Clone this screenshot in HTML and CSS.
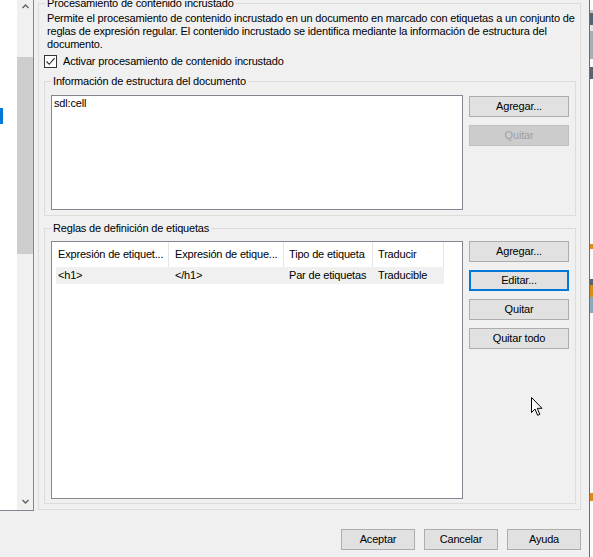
FILE: index.html
```html
<!DOCTYPE html>
<html lang="es">
<head>
<meta charset="utf-8">
<title>Procesamiento de contenido incrustado</title>
<link rel="stylesheet" href="styles.css">
</head>
<body>
<div class="screen">
  <div class="left-pane">
    <div class="tree"><span class="marker"></span></div>
    <div class="vscroll">
      <div class="arrow-btn"><svg width="7" height="5" viewBox="0 0 7 5"><path d="M0.5 4 L3.5 1 L6.5 4" fill="none" stroke="#606060" stroke-width="1.4"/></svg></div>
      <div class="thumb"></div>
      <div class="arrow-btn bottom"><svg width="7" height="5" viewBox="0 0 7 5"><path d="M0.5 1 L3.5 4 L6.5 1" fill="none" stroke="#606060" stroke-width="1.4"/></svg></div>
    </div>
  </div>

  <div class="dialog">
    <fieldset class="group outer">
      <legend class="legend-outer">Procesamiento de contenido incrustado</legend>
      <p class="desc">Permite el procesamiento de contenido incrustado en un documento en marcado con etiquetas a un conjunto de reglas de expresión regular. El contenido incrustado se identifica mediante la información de estructura del documento.</p>
      <label class="check">
        <span class="box"><svg width="11" height="11" viewBox="0 0 11 11"><path d="M1.5 5.5 L4.2 8.3 L9.6 2.2" fill="none" stroke="#222" stroke-width="1.1"/></svg></span>
        <span>Activar procesamiento de contenido incrustado</span>
      </label>

      <fieldset class="group inner info">
        <legend>Información de estructura del documento</legend>
        <div class="pair">
          <div class="textbox">sdl:cell</div>
          <div class="btns">
            <button class="btn side">Agregar...</button>
            <button class="btn side" disabled>Quitar</button>
          </div>
        </div>
      </fieldset>

      <fieldset class="group inner rules">
        <legend>Reglas de definición de etiquetas</legend>
        <div class="pair">
          <div class="listview">
            <div class="lv-head">
              <div class="c c1">Expresión de etiquet...</div>
              <div class="c c2">Expresión de etique...</div>
              <div class="c c3">Tipo de etiqueta</div>
              <div class="c c4">Traducir</div>
            </div>
            <div class="lv-row">
              <div class="c c1">&lt;h1&gt;</div>
              <div class="c c2">&lt;/h1&gt;</div>
              <div class="c c3">Par de etiquetas</div>
              <div class="c c4">Traducible</div>
            </div>
          </div>
          <div class="btns">
            <button class="btn side">Agregar...</button>
            <button class="btn side focus">Editar...</button>
            <button class="btn side">Quitar</button>
            <button class="btn side">Quitar todo</button>
          </div>
        </div>
      </fieldset>
    </fieldset>

    <div class="footer">
      <button class="btn foot">Aceptar</button>
      <button class="btn foot">Cancelar</button>
      <button class="btn foot">Ayuda</button>
    </div>
  </div>

  <div class="edge">
    <div class="e e-white h10"></div>
    <div class="e e-gray h3"></div>
    <div class="e e-text h12"></div>
    <div class="e e-light h6"></div>
    <div class="e e-thumb h28"></div>
    <div class="e e-white h8"></div>
    <div class="e e-text h12"></div>
    <div class="e e-white h165"></div>
    <div class="e e-orange h5"></div>
    <div class="e e-white h30"></div>
    <div class="e e-text h6"></div>
    <div class="e e-orange h12"></div>
    <div class="e e-blue h16"></div>
    <div class="e e-white h180"></div>
    <div class="e e-orange h8"></div>
    <div class="e e-white h56"></div>
  </div>
</div>

<svg class="cursor" width="13" height="20" viewBox="0 0 13 20">
  <path d="M0.5 0.5 L0.5 15.5 L4 12 L6.6 18.3 L8.8 17.4 L6.3 11.3 L11 11.3 Z" fill="#fff" stroke="#000" stroke-width="1"/>
</svg>
</body>
</html>
```

FILE: styles.css
```css
* { box-sizing: border-box; }

html, body {
  margin: 0;
  padding: 0;
  background: #f0f0f0;
  overflow: hidden;
}

body {
  font-family: "Liberation Sans", Arial, sans-serif;
  font-size: 11px;
  line-height: 13px;
  letter-spacing: -0.18px;
  color: #000;
  width: 593px;
  height: 557px;
  position: relative;
}

.screen {
  display: flex;
  width: 593px;
  height: 557px;
}

/* left pane */
.left-pane {
  width: 34px;
  height: 511px;
  display: flex;
  border-right: 1px solid #828790;
  border-bottom: 1px solid #828790;
  flex-shrink: 0;
}

.tree {
  width: 17px;
  background: #fff;
  padding-top: 108px;
}

.marker {
  display: block;
  width: 3px;
  height: 16px;
  background: #0078d7;
}

.vscroll {
  width: 16px;
  background: #f0f0f0;
  display: flex;
  flex-direction: column;
}

.arrow-btn {
  height: 17px;
  display: flex;
  justify-content: center;
  padding-top: 4px;
  padding-left: 1px;
}

.arrow-btn.bottom {
  margin-top: auto;
  height: 16px;
  padding-top: 5px;
}

.thumb {
  margin-top: 40px;
  height: 197px;
  background: #cdcdcd;
}

/* dialog */
.dialog {
  width: 555px;
  flex-shrink: 0;
  display: flex;
  flex-direction: column;
}

.group {
  border: 1px solid #dcdcdc;
  margin: 0;
  min-width: 0;
}

.group legend {
  padding: 0 2px;
  line-height: 13px;
}

.outer {
  margin: -3px 0 0 4px;
  width: 543px;
  padding: 0 4px 5px 5px;
}

.legend-outer {
  margin-left: 1px;
}

.desc {
  margin: 2px 0 0 3px;
  width: 528px;
}

.check {
  display: flex;
  align-items: center;
  height: 13px;
  margin-top: 4px;
}

.box {
  width: 13px;
  height: 13px;
  border: 1px solid #333;
  background: #fff;
  display: flex;
  align-items: center;
  justify-content: center;
  margin-right: 6px;
}

.inner {
  width: 532px;
  padding: 7px 6px 5px 6px;
}

.info {
  margin-top: 7px;
}

.rules {
  margin-top: 6px;
  padding-top: 6px;
  padding-bottom: 4px;
}

.pair {
  display: flex;
  gap: 6px;
  align-items: flex-start;
}

.textbox {
  width: 412px;
  height: 115px;
  background: #fff;
  border: 1px solid #828790;
  padding: 1px 2px;
}

.btns {
  display: flex;
  flex-direction: column;
  gap: 8px;
  padding-top: 1px;
}

.rules .btns {
  padding-top: 0;
}

.btn {
  font: inherit;
  letter-spacing: inherit;
  color: #000;
  background: #e1e1e1;
  border: 1px solid #adadad;
  height: 21px;
  padding: 0;
  margin: 0;
  border-radius: 0;
}

.btn.side {
  width: 100px;
}

.btn:disabled {
  background: #cccccc;
  border-color: #bfbfbf;
  color: #a0a0a0;
}

.btn.focus {
  border: 2px solid #0078d7;
}

/* list view */
.listview {
  width: 412px;
  height: 258px;
  background: #fff;
  border: 1px solid #828790;
}

.lv-head {
  display: flex;
  height: 25px;
}

.lv-head .c {
  border-right: 1px solid #e5e5e5;
  padding-top: 6px;
}

.c {
  white-space: nowrap;
  overflow: hidden;
}

.c1 { width: 117px; padding-left: 6px; }
.c2 { width: 115px; padding-left: 6px; }
.c3 { width: 89px; padding-left: 5px; }
.c4 { width: 71px; padding-left: 5px; }

.lv-row {
  display: flex;
  height: 17px;
  margin-left: 4px;
  width: 388px;
  background: #f0f0f0;
  padding-top: 2px;
}

.lv-row .c1 { width: 113px; padding-left: 2px; }

/* footer */
.footer {
  display: flex;
  justify-content: flex-end;
  gap: 9px;
  margin-top: 19px;
  padding-right: 8px;
}

.btn.foot {
  width: 74px;
}

/* right edge: neighbouring window */
.edge {
  width: 4px;
  flex-shrink: 0;
  border-left: 1px solid #2b7bd6;
  display: flex;
  flex-direction: column;
}

.e { width: 100%; }
.e-white { background: #fbfbfb; }
.e-gray { background: #c8c8c8; }
.e-text { background: #5a6470; }
.e-light { background: #e4e4e4; }
.e-thumb { background: #a8aeb6; }
.e-orange { background: #d98b1c; }
.e-blue { background: #8fa7bf; }

.h3 { height: 3px; }
.h5 { height: 5px; }
.h6 { height: 6px; }
.h8 { height: 8px; }
.h10 { height: 10px; }
.h12 { height: 12px; }
.h16 { height: 16px; }
.h28 { height: 28px; }
.h30 { height: 30px; }
.h56 { height: 56px; }
.h165 { height: 165px; }
.h180 { height: 180px; }

.cursor {
  position: absolute;
  left: 531px;
  top: 397px;
}
```
